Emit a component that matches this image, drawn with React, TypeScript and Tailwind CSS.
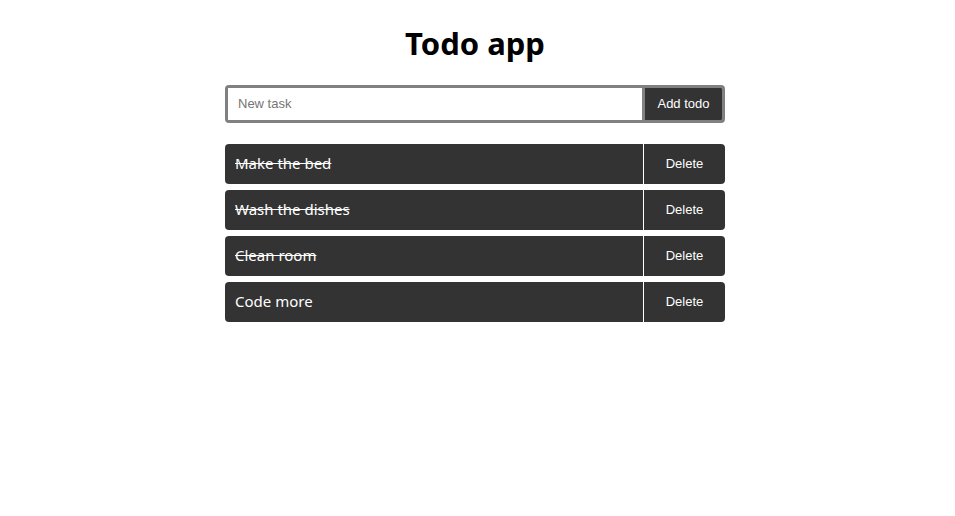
import { useState } from "react";

type Todo = { id: number; text: string; done: boolean };

const INITIAL: Todo[] = [
  { id: 1, text: "Make the bed", done: true },
  { id: 2, text: "Wash the dishes", done: true },
  { id: 3, text: "Clean room", done: true },
  { id: 4, text: "Code more", done: false },
];

export default function App() {
  const [todos, setTodos] = useState<Todo[]>(INITIAL);
  const [text, setText] = useState("");

  const add = (e: React.FormEvent) => {
    e.preventDefault();
    if (!text.trim()) return;
    setTodos((t) => [...t, { id: Date.now(), text: text.trim(), done: false }]);
    setText("");
  };

  return (
    <div className="min-h-screen bg-white flex justify-center pr-[5px] font-['Noto_Sans',sans-serif]">
      <div className="w-[500px] flex flex-col pt-[23px]">
        <h1 className="text-center text-[31px] font-bold leading-[40px] text-black">Todo app</h1>

        <form onSubmit={add} className="mt-[22px] flex h-[38px] border-[3px] border-[#808080] rounded-[4px] overflow-hidden">
          <input
            value={text}
            onChange={(e) => setText(e.target.value)}
            placeholder="New task"
            className="flex-1 min-w-0 px-[10px] bg-white text-[13px] text-black outline-none border-r-[3px] border-[#808080] placeholder:text-[#757575] font-['Liberation_Sans',Arial,sans-serif]"
          />
          <button type="submit" className="w-[77px] bg-[#333333] text-white text-[13px] font-['Liberation_Sans',Arial,sans-serif]">
            Add todo
          </button>
        </form>

        <ul className="mt-[21px] flex flex-col gap-[6px]">
          {todos.map((t) => (
            <li key={t.id} className="flex h-[40px] bg-[#333333] rounded-[4px] overflow-hidden">
              <span
                onClick={() => setTodos((all) => all.map((x) => (x.id === t.id ? { ...x, done: !x.done } : x)))}
                className={`flex-1 flex items-center px-[10px] pb-[2px] text-[15px] text-white cursor-pointer ${t.done ? "line-through" : ""}`}
              >
                {t.text}
              </span>
              <button
                onClick={() => setTodos((all) => all.filter((x) => x.id !== t.id))}
                className="w-[82px] border-l border-white text-white text-[13px] font-['Liberation_Sans',Arial,sans-serif]"
              >
                Delete
              </button>
            </li>
          ))}
        </ul>
      </div>
    </div>
  );
}
